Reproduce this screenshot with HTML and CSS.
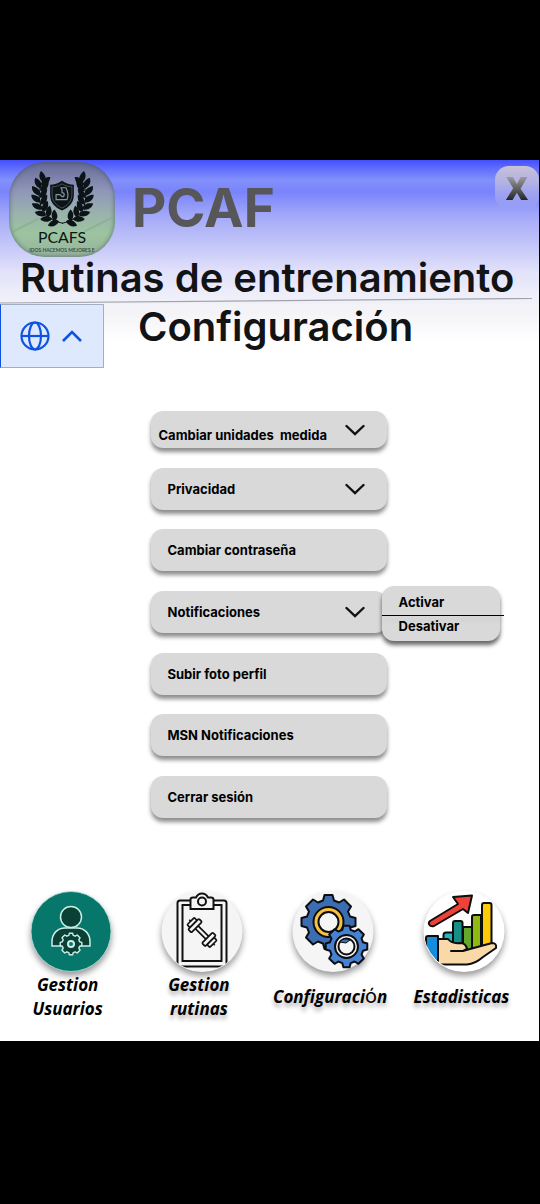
FILE: index.html
```html
<!DOCTYPE html>
<html lang="es">
<head>
<meta charset="utf-8">
<meta name="viewport" content="width=device-width, initial-scale=1">
<title>PCAF - Configuración</title>
<link rel="stylesheet" href="styles.css">
</head>
<body>
<svg class="defs" aria-hidden="true">
  <defs>
    <path id="leaf" d="M0 0C-6 0-9-4-9-8C-4-8 1-6 0 0Z"/>
    <g id="branch">
      <use href="#leaf" transform="translate(50 60) rotate(-62)"/>
      <use href="#leaf" transform="translate(43 58) rotate(-40)"/>
      <use href="#leaf" transform="translate(37 54) rotate(-25)"/>
      <use href="#leaf" transform="translate(33 48) rotate(-12)"/>
      <use href="#leaf" transform="translate(31 41) rotate(0)"/>
      <use href="#leaf" transform="translate(30 34) rotate(12)"/>
      <use href="#leaf" transform="translate(31 27) rotate(24)"/>
      <use href="#leaf" transform="translate(34 21) rotate(38)"/>
      <use href="#leaf" transform="translate(45 60) rotate(50)"/>
      <use href="#leaf" transform="translate(38 56) rotate(62)"/>
      <use href="#leaf" transform="translate(33 50) rotate(76)"/>
      <use href="#leaf" transform="translate(31 43) rotate(84)"/>
      <use href="#leaf" transform="translate(30 36) rotate(90)"/>
      <use href="#leaf" transform="translate(31 29) rotate(94)"/>
      <use href="#leaf" transform="translate(32 23) rotate(98)"/>
      <path d="M54 62C38 59 30 47 30 35C30 27 32 21 36 15" fill="none" stroke="#0c1418" stroke-width="1"/>
    </g>
    <path id="gear8" d="M-4-27H4L5.500-21.500L10.500-19.500L15.500-22.500L22.500-15.500L19.500-10.500L21.500-5.500L27-4V4L21.500 5.500L19.500 10.500L22.500 15.500L15.500 22.500L10.500 19.500L5.500 21.500L4 27H-4L-5.500 21.500L-10.500 19.500L-15.500 22.500L-22.500 15.500L-19.500 10.500L-21.500 5.500L-27 4V-4L-21.500-5.500L-19.500-10.500L-22.500-15.500L-15.500-22.500L-10.500-19.500L-5.500-21.500Z"/>
    <clipPath id="disc"><circle cx="41" cy="40" r="40"/></clipPath>
    <clipPath id="disc-open"><path d="M0 0H82V40A41 40 0 0 1 0 40Z"/></clipPath>
  </defs>
</svg>
<div class="app">
  <header class="top">
    <div class="brand">
      <svg class="logo" viewBox="0 0 106 96" role="img" aria-label="PCAFS">
        <path d="M0 72L30 57M76 70L106 55" stroke="#83a58c" stroke-width="2" opacity=".5"/>
        <g fill="#0c1418">
          <use href="#branch"/>
          <use href="#branch" transform="translate(107 0) scale(-1 1)"/>
        </g>
        <path d="M53 19C57 22 61 23 65 23V33C65 41 60 46 53 49C46 46 41 41 41 33V23C45 23 49 22 53 19Z" fill="#0c1418"/>
        <path d="M53 22C56 24 59 25 63 25V33C63 39 59 44 53 46.500C47 44 43 39 43 33V25C47 25 50 24 53 22Z" fill="none" stroke="#526166" stroke-width=".8"/>
        <path d="M52 26H57C59 30 60 34 58 38H47V33H51L53 35C56 35 56 31 53 31V28Z" fill="none" stroke="#84949a" stroke-width="1.200"/>
        <text class="logo-name" x="53" y="82" text-anchor="middle">PCAFS</text>
        <text class="logo-motto" x="53" y="91" text-anchor="middle">IDOS HACEMOS MEJORES E</text>
      </svg>
      <p class="brand-name">PCAF</p>
      <button class="close" type="button" aria-label="Cerrar"><span>X</span></button>
    </div>
    <h1 class="title">Rutinas de entrenamiento</h1>
    <svg class="rule" viewBox="0 0 532 6" preserveAspectRatio="none" aria-hidden="true"><path d="M0 5L532 0.500" stroke="#a2a2aa" stroke-width="1.200"/></svg>
    <div class="subhead">
      <button class="language" type="button" aria-label="Idioma">
        <svg width="30" height="30" viewBox="0 0 30 30" fill="none" stroke="#0f52e0" stroke-width="2.200"><circle cx="15" cy="15" r="13.500"/><ellipse cx="15" cy="15" rx="6" ry="13.500"/><path d="M1.500 15H28.500"/></svg>
        <svg width="20" height="14" viewBox="0 0 20 14" fill="none" stroke="#0f52e0" stroke-width="2.600"><path d="M1 12L10 3L19 12"/></svg>
      </button>
      <h2 class="title">Configuración</h2>
    </div>
  </header>

  <main class="settings">
    <ul class="options">
      <li><button class="option option-compact" type="button"><span>Cambiar unidades  medida</span><svg class="chevron" viewBox="0 0 20 12"><path d="M1.500 2L10 10L18.500 2"/></svg></button></li>
      <li><button class="option" type="button"><span>Privacidad</span><svg class="chevron" viewBox="0 0 20 12"><path d="M1.500 2L10 10L18.500 2"/></svg></button></li>
      <li><button class="option" type="button">Cambiar contraseña</button></li>
      <li class="has-menu">
        <button class="option" type="button" aria-expanded="true"><span>Notificaciones</span><svg class="chevron" viewBox="0 0 20 12"><path d="M1.500 2L10 10L18.500 2"/></svg></button>
        <div class="menu">
          <button type="button">Activar</button>
          <hr>
          <button type="button">Desativar</button>
        </div>
      </li>
      <li><button class="option" type="button">Subir foto perfil</button></li>
      <li><button class="option" type="button">MSN Notificaciones</button></li>
      <li><button class="option" type="button">Cerrar sesión</button></li>
    </ul>
  </main>

  <nav class="tabs">
    <a class="tab tab-plain" href="#usuarios">
      <svg class="tab-icon" viewBox="0 0 82 82" aria-hidden="true">
        <circle cx="41" cy="40.500" r="40" fill="#06776a" stroke="#b9e3dc" stroke-width=".8"/>
        <g fill="#0b4035" stroke="#c9eee7" stroke-width="1.500">
          <path d="M22 55V51C22 42 28 37 35 37H47C54 37 60 42 60 51V55Z"/>
          <circle cx="41" cy="26" r="10.500"/>
          <use href="#gear8" transform="translate(41 53) scale(.4)" stroke-width="3.600" stroke-linejoin="round"/>
          <circle cx="41" cy="53" r="3" fill="#06776a" stroke-width="2"/>
        </g>
      </svg>
      <span class="tab-label">Gestion<br>Usuarios</span>
    </a>
    <a class="tab" href="#rutinas">
      <svg class="tab-icon" viewBox="0 0 82 82" aria-hidden="true">
        <circle cx="41" cy="40.500" r="40.500" fill="#f5f5f5"/>
        <g fill="none" stroke="#111" stroke-width="2" clip-path="url(#disc-open)">
          <path d="M16.500 75.500V12Q16.500 9.500 19 9.500H63Q65.500 9.500 65.500 12V75.500Z"/>
          <rect x="21.500" y="14" width="39" height="56"/>
          <path d="M29.500 18V8.500Q29.500 6.500 32 6.500H35Q37 2.500 41 2.500Q45 2.500 47 6.500H50Q52.500 6.500 52.500 8.500V18Z" fill="#f5f5f5"/>
          <circle cx="41" cy="10.500" r="4"/>
        </g>
        <g transform="translate(41 41.500) rotate(45)" fill="#f5f5f5" stroke="#111" stroke-width="1.700">
          <path d="M-18 0H18"/>
          <rect x="-8" y="-2" width="16" height="4"/>
          <rect x="-16" y="-5" width="4" height="10" rx="1"/><rect x="-12" y="-7.500" width="4.500" height="15" rx="1"/>
          <rect x="12" y="-5" width="4" height="10" rx="1"/><rect x="7.500" y="-7.500" width="4.500" height="15" rx="1"/>
        </g>
      </svg>
      <span class="tab-label">Gestion<br>rutinas</span>
    </a>
    <a class="tab" href="#configuracion">
      <svg class="tab-icon" viewBox="0 0 82 82" aria-hidden="true">
        <circle cx="41" cy="40.500" r="40.500" fill="#f5f5f5"/>
        <g stroke="#0b0d12" stroke-width="2" stroke-linejoin="round">
          <use href="#gear8" transform="translate(36.500 31)" fill="#3c6db0"/>
          <circle cx="36.500" cy="31" r="15" fill="#f9c23c"/>
          <circle cx="36.500" cy="31" r="10" fill="#f5f5f5"/>
          <use href="#gear8" transform="translate(54.500 55.500) scale(.77)" fill="#4583d2" stroke-width="2.600"/>
          <circle cx="54.500" cy="55.500" r="11.500" fill="#f6f0e4"/>
          <circle cx="54.500" cy="55.500" r="8" fill="#f5f5f5"/>
          <path d="M47.500 51Q52 46 58 49L54 52Z" fill="#3c6db0" stroke-width="1"/>
        </g>
      </svg>
      <span class="tab-label">Configuraci<span class="accent">ó</span>n</span>
    </a>
    <a class="tab" href="#estadisticas">
      <svg class="tab-icon" viewBox="0 0 82 82" aria-hidden="true">
        <circle cx="41" cy="40.500" r="40.500" fill="#fff"/>
        <g stroke="#0d0d0d" stroke-width="2" stroke-linejoin="round">
          <path d="M20.500 60V44Q20.500 41.500 23 41.500H30V60Z" fill="#27b5b9"/>
          <path d="M30 60V32Q30 30 32 30H37.500Q39.500 30 39.500 32V60Z" fill="#168f86"/>
          <path d="M40 60V36H49V60Z" fill="#62a92b"/>
          <path d="M49 60V26Q49 24 51 24H58V58Z" fill="#8fb911"/>
          <path d="M59 55V14Q59 12 61 12H66.500Q68.500 12 68.500 14V55Z" fill="#fccb08"/>
          <path d="M7 30L35 13L30 6L49 4.500L45 22L40 18L11 35Q8 36 6.500 34Q5 32 7 30Z" fill="#ee4238"/>
          <g clip-path="url(#disc)">
            <path d="M3 47Q3 45 5 45H15V71H3Z" fill="#168cdd"/>
            <path d="M15 48H25Q29 53 37 52Q43 52 44 58L40 60H28H40L47 58L69 52Q74 52 73 57L60 66Q52 73 44 73.500H15Z" fill="#f9d9a8"/>
          </g>
        </g>
      </svg>
      <span class="tab-label">Estadisticas</span>
    </a>
  </nav>
</div>
</body>
</html>
```
FILE: styles.css
```css
* { box-sizing: border-box; }

body {
  margin: 0;
  padding: 160px 1px 0 0;
  min-height: 100vh;
  background: #000;
  color: #000;
  font-family: Inter, "Liberation Sans", sans-serif;
}

button {
  margin: 0;
  padding: 0;
  border: 0;
  background: none;
  color: inherit;
  font: inherit;
  cursor: pointer;
}

.defs { position: absolute; width: 0; height: 0; }

.app { background: #fff; }

.top {
  background: linear-gradient(#444ffd 0, #5865fd 6px, #8290fb 20px, #7a83fb 32px, #a3a9f8 56px, #c9cbf9 90px, #e2e2fa 112px, #efeffa 136px, #f3f3f7 150px, #fff 182px);
}

.brand {
  display: flex;
  align-items: flex-start;
  padding: 2px 0 0 9px;
}

.logo {
  width: 106px;
  height: 95px;
  border-radius: 36px;
  background: linear-gradient(#666a98, #8f96b8 30%, #9ab3ac 55%, #9cc49f 75%, #98b39f);
  box-shadow: inset 0 0 5px rgba(40, 60, 70, .6);
}

.logo-name { font: 16px Lato, sans-serif; fill: #0c1418; }
.logo-motto { font: bold 5px Lato, sans-serif; fill: #37513f; }

.brand-name {
  margin: 0 0 0 17px;
  color: #57575a;
  font-size: 53px;
  font-weight: 700;
  line-height: 93px;
}

.close {
  width: 44px;
  height: 44px;
  margin: 4px 0 0 auto;
  border-radius: 14px;
  background: linear-gradient(#cbc3d6, rgba(185, 185, 230, .6) 60%, rgba(160, 166, 248, 0));
  font-family: "Open Sans", sans-serif;
  font-size: 31px;
  font-weight: 800;
  line-height: 42px;
}

.close span {
  background: linear-gradient(#999 25%, #222 80%);
  background-clip: text;
  -webkit-background-clip: text;
  color: transparent;
}

.title {
  margin: 0;
  color: #121315;
  font-size: 40px;
  font-weight: 600;
  line-height: 41px;
}

h1.title { padding-left: 20px; white-space: nowrap; }

h2.title { padding-left: 34px; line-height: 46px; }

.rule { display: block; width: calc(100% - 7px); height: 6px; }

.subhead { display: flex; align-items: flex-start; }

.language {
  display: flex;
  align-items: center;
  gap: 12px;
  width: 104px;
  height: 64px;
  padding-left: 19px;
  border: 1px solid #a3adc3;
  border-left-color: #0f52e0;
  background: #dfe9fd;
}

.settings {
  display: flex;
  justify-content: center;
  padding: 43px 2px 73px 0;
}

.options {
  display: flex;
  flex-direction: column;
  justify-content: space-between;
  width: 236px;
  min-height: 407px;
  margin: 0;
  padding: 0;
  list-style: none;
}

.option {
  display: flex;
  align-items: center;
  justify-content: space-between;
  width: 100%;
  height: 42px;
  padding: 0 22px 0 17px;
  border-radius: 12px;
  background: #d9d9d9;
  box-shadow: 0 4px 4px rgba(0, 0, 0, .45);
  font-size: 13px;
  font-weight: 700;
  white-space: pre;
}

.option-compact { height: 37px; padding-left: 8px; }
.option-compact span { padding-top: 10px; }

.chevron {
  width: 20px;
  height: 12px;
  fill: none;
  stroke: #111;
  stroke-width: 2.4;
  stroke-linecap: round;
}

.has-menu { position: relative; }

.menu {
  position: absolute;
  top: -5px;
  left: 231px;
  display: flex;
  flex-direction: column;
  width: 118px;
  padding: 5px 0;
  border-radius: 12px;
  background: #d9d9d9;
  box-shadow: 0 4px 4px rgba(0, 0, 0, .6);
}

.menu button {
  padding-left: 17px;
  font-size: 13px;
  font-weight: 700;
  line-height: 22px;
  text-align: left;
}

.menu button:first-child { padding-bottom: 2px; }

.menu hr {
  width: 122px;
  height: 1px;
  margin: 0;
  border: 0;
  background: #000;
  box-shadow: 0 4px 4px rgba(0, 0, 0, .1);
}

.menu hr + button { line-height: 20px; }

.tabs {
  display: grid;
  grid-template-columns: repeat(4, 1fr);
  padding: 0 9px 20px 5px;
}

.tab {
  display: flex;
  flex-direction: column;
  align-items: center;
  color: #000;
  text-decoration: none;
}

.tab-icon {
  width: 82px;
  height: 82px;
  filter: drop-shadow(0 4px 3px rgba(0, 0, 0, .4));
}

.tab-label {
  margin: auto 6px auto 0;
  font-family: "Open Sans", "Noto Sans", sans-serif;
  font-size: 17px;
  font-style: italic;
  font-weight: 700;
  line-height: 24px;
  text-align: center;
  text-shadow: 0 4px 4px rgba(0, 0, 0, .3);
}

.tab-plain .tab-label { text-shadow: none; }

.accent {
  font-family: Inter, sans-serif;
  font-size: 20px;
  font-style: normal;
  font-weight: 400;
  line-height: 20px;
}
```
